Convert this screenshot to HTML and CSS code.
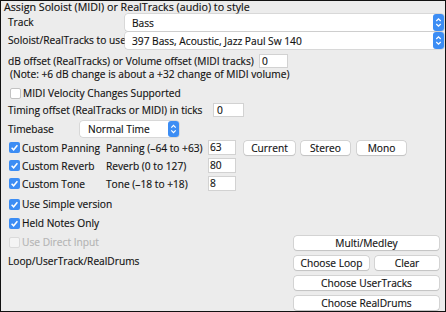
FILE: index.html
```html
<!DOCTYPE html>
<html lang="en">
<head>
    <meta charset="UTF-8">
    <title>Assign Soloist</title>
    <link rel="stylesheet" href="styles.css">
</head>
<body>
    <div class="dialog">
        <div class="title">Assign Soloist (MIDI) or RealTracks (audio) to style</div>

        <div class="row row-sel">
            <span class="lbl lbl-sel">Track</span>
            <div class="select select-wide">
                <span class="sel-text">Bass</span>
                <svg class="sel-btn" width="11" height="17" viewBox="0 0 11 17"><rect x="0" y="0" width="11" height="17" rx="3" fill="#3c8df4"/><path d="M3.3 7 L5.5 4.8 L7.7 7 M3.3 10 L5.5 12.2 L7.7 10" stroke="#fff" stroke-width="1.2" fill="none"/></svg>
            </div>
        </div>
        <div class="row row-sel">
            <span class="lbl lbl-sel">Soloist/RealTracks to use</span>
            <div class="select select-wide">
                <span class="sel-text">397 Bass, Acoustic, Jazz Paul Sw 140</span>
                <svg class="sel-btn" width="11" height="17" viewBox="0 0 11 17"><rect x="0" y="0" width="11" height="17" rx="3" fill="#3c8df4"/><path d="M3.3 7 L5.5 4.8 L7.7 7 M3.3 10 L5.5 12.2 L7.7 10" stroke="#fff" stroke-width="1.2" fill="none"/></svg>
            </div>
        </div>

        <div class="row row-db">
            <span class="lbl lbl-db">dB offset (RealTracks) or Volume offset (MIDI tracks)</span>
            <div class="field field-db">0</div>
        </div>
        <div class="note">(Note: +6 dB change is about a +32 change of MIDI volume)</div>

        <div class="row row-velo">
            <span class="check"></span>
            <span class="check-text">MIDI Velocity Changes Supported</span>
        </div>

        <div class="row row-timing">
            <span class="lbl lbl-timing">Timing offset (RealTracks or MIDI) in ticks</span>
            <div class="field field-timing">0</div>
        </div>

        <div class="row row-timebase">
            <span class="lbl lbl-timebase">Timebase</span>
            <div class="select select-small">
                <span class="sel-text">Normal Time</span>
                <svg class="sel-btn" width="11" height="16" viewBox="0 0 11 16"><rect x="0" y="0" width="11" height="16" rx="3" fill="#3c8df4"/><path d="M3.3 6.6 L5.5 4.4 L7.7 6.6 M3.3 9.4 L5.5 11.6 L7.7 9.4" stroke="#fff" stroke-width="1.2" fill="none"/></svg>
            </div>
        </div>

        <div class="row row-fx">
            <span class="fx-check"><span class="check on"></span><span class="check-text">Custom Panning</span></span>
            <span class="fx-lbl">Panning (–64 to +63)</span>
            <div class="field field-fx">63</div>
            <button class="btn btn-current">Current</button>
            <button class="btn btn-stereo">Stereo</button>
            <button class="btn btn-mono">Mono</button>
        </div>
        <div class="row row-fx">
            <span class="fx-check"><span class="check on"></span><span class="check-text">Custom Reverb</span></span>
            <span class="fx-lbl">Reverb (0 to 127)</span>
            <div class="field field-fx">80</div>
        </div>
        <div class="row row-fx">
            <span class="fx-check"><span class="check on"></span><span class="check-text">Custom Tone</span></span>
            <span class="fx-lbl">Tone (–18 to +18)</span>
            <div class="field field-fx">8</div>
        </div>

        <div class="bottom">
            <div class="bottom-left">
                <div class="opt"><span class="check on"></span><span class="check-text">Use Simple version</span></div>
                <div class="opt"><span class="check on"></span><span class="check-text">Held Notes Only</span></div>
                <div class="opt disabled"><span class="check off"></span><span class="check-text">Use Direct Input</span></div>
                <div class="opt loop-lbl">Loop/UserTrack/RealDrums</div>
            </div>
            <div class="bottom-right">
                <button class="btn btn-full">Multi/Medley</button>
                <div class="btn-pair">
                    <button class="btn btn-loop">Choose Loop</button>
                    <button class="btn btn-clear">Clear</button>
                </div>
                <button class="btn btn-full">Choose UserTracks</button>
                <button class="btn btn-full">Choose RealDrums</button>
            </div>
        </div>
    </div>
</body>
</html>
```

FILE: styles.css
```css
body {
    margin: 0;
    padding: 0;
    background: #ececec;
    font-family: 'Open Sans', 'Liberation Sans', sans-serif;
    font-size: 10.2px;
    color: #111;
}

.dialog {
    width: 446px;
    height: 312px;
    box-sizing: border-box;
    border: 1px solid #111;
    background: #ececec;
    overflow: hidden;
    display: flex;
    flex-direction: column;
    -webkit-text-stroke: 0.15px;
}

.title {
    height: 13px;
    line-height: 12px;
    padding-left: 3px;
    font-size: 10.7px;
    white-space: nowrap;
}

.row {
    display: flex;
    align-items: center;
    white-space: nowrap;
}

.lbl {
    box-sizing: border-box;
    flex: none;
}

.row-sel {
    height: 18px;
    align-items: flex-start;
}

.row-sel .lbl {
    line-height: 17px;
}

.lbl-sel {
    width: 124px;
    padding-left: 7px;
}

.select {
    display: flex;
    align-items: center;
    justify-content: space-between;
    background: #fff;
    border-radius: 3px;
    box-shadow: 0 0 0 0.5px #c4c4c4;
    box-sizing: border-box;
}

.select-wide {
    width: 319px;
    height: 17px;
}

.select-small {
    width: 99px;
    height: 16px;
}

.sel-text {
    padding-left: 7px;
}

.select-small .sel-text {
    padding-left: 8px;
}

.sel-btn {
    display: block;
    flex: none;
}

.field {
    background: #fff;
    box-shadow: inset 0 0 0 1px #d2d2d2;
    box-sizing: border-box;
    height: 100%;
    line-height: 14px;
    padding-left: 3px;
}

.row-db {
    margin-top: 4px;
    height: 14px;
}

.lbl-db {
    width: 258px;
    padding-left: 7px;
}

.field-db {
    width: 29px;
}

.note {
    height: 12px;
    line-height: 12px;
    padding-left: 9px;
    white-space: nowrap;
}

.row-velo {
    margin-top: 6px;
    height: 14px;
    padding-left: 9px;
}

.check {
    flex: none;
    width: 11px;
    height: 11px;
    box-sizing: border-box;
    border-radius: 2px;
    background: #fff;
    border: 1px solid #c2c2c2;
}

.check.on {
    border: none;
    background: #3c8df4 url("data:image/svg+xml;utf8,<svg xmlns='http://www.w3.org/2000/svg' width='11' height='11'><path d='M2.6 5.8 L4.6 7.8 L8.4 3.2' stroke='white' stroke-width='1.5' fill='none'/></svg>") no-repeat center;
}

.check.off {
    background: #f4f4f4;
    border-color: #dadada;
}

.check-text {
    margin-left: 2px;
}

.row-timing {
    margin-top: 3px;
    height: 14px;
}

.lbl-timing {
    width: 212px;
    padding-left: 7px;
}

.field-timing {
    width: 31px;
    padding-left: 4px;
}

.row-timebase {
    margin-top: 4px;
    height: 16px;
}

.lbl-timebase {
    width: 79px;
    padding-left: 7px;
}

.row-fx {
    margin-top: 3px;
    height: 15px;
}

.fx-check {
    display: flex;
    align-items: center;
    width: 105px;
    padding-left: 8px;
    box-sizing: border-box;
    flex: none;
}

.fx-lbl {
    width: 102px;
    flex: none;
}

.field-fx {
    width: 28px;
    padding-left: 2px;
    line-height: 15px;
}

.btn {
    font-family: inherit;
    font-size: 10.2px;
    color: #111;
    background: #fff;
    border: none;
    border-radius: 3px;
    box-shadow: 0 0 0 0.5px #bdbdbd, 0 0.5px 1px rgba(0, 0, 0, 0.15);
    height: 14px;
    padding: 0;
    line-height: 14px;
    text-align: center;
    box-sizing: border-box;
    white-space: nowrap;
    -webkit-text-stroke: 0.15px;
}

.btn-current {
    width: 51px;
    margin-left: 8px;
}

.btn-stereo {
    width: 49px;
    margin-left: 6px;
}

.btn-mono {
    width: 49px;
    margin-left: 7px;
}

.bottom {
    display: flex;
    margin-top: 6px;
}

.bottom-left {
    width: 293px;
    display: flex;
    flex-direction: column;
    gap: 5px;
}

.opt {
    display: flex;
    align-items: center;
    height: 14px;
    padding-left: 8px;
    white-space: nowrap;
}

.opt.disabled {
    color: #b4b4b4;
}

.loop-lbl {
    padding-left: 7px;
}

.bottom-right {
    width: 145px;
    padding-top: 39px;
    display: flex;
    flex-direction: column;
    gap: 6px;
}

.btn-full {
    width: 145px;
}

.btn-pair {
    display: flex;
    gap: 6px;
}

.btn-loop {
    width: 75px;
}

.btn-clear {
    width: 64px;
}
```
